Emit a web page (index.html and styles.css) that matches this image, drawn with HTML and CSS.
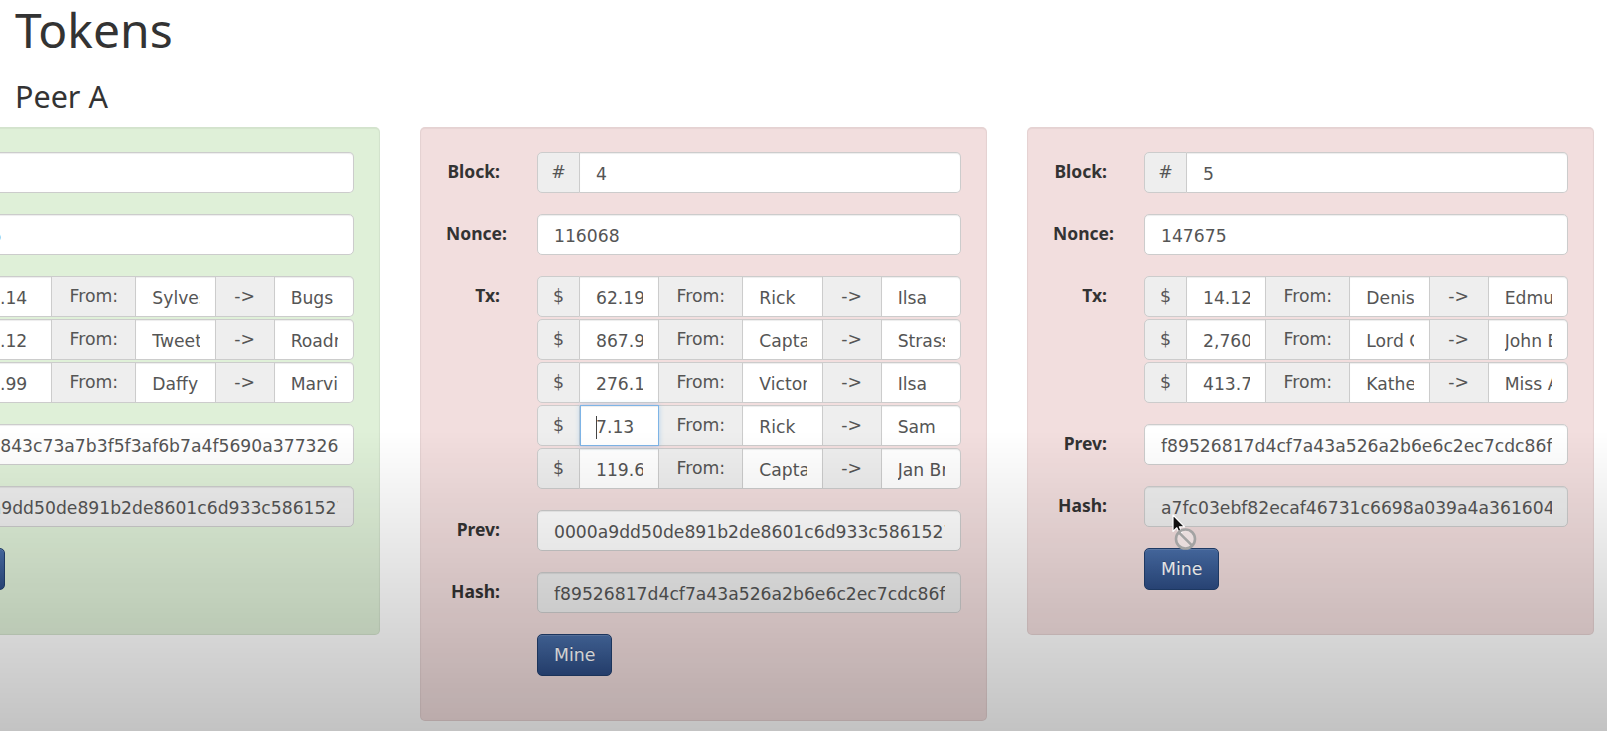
FILE: index.html
```html
<!DOCTYPE html>
<html lang="en">
<head>
<meta charset="utf-8">
<title>Tokens</title>
<link rel="stylesheet" href="styles.css">
</head>
<body>
<div class="page">
  <h1 class="title">Tokens</h1>
  <h3 class="peer">Peer A</h3>

  <div class="chain">
    <!-- Block 3 (valid) -->
    <div class="block block-ok">
      <div class="field">
        <label class="lbl">Block:</label>
        <div class="ctl"><div class="group"><span class="addon a-short">#</span><input class="inp" value="3"></div></div>
      </div>
      <div class="field">
        <label class="lbl">Nonce:</label>
        <div class="ctl"><input class="inp" value="19845"></div>
      </div>
      <div class="field">
        <label class="lbl">Tx:</label>
        <div class="ctl">
          <div class="group txrow"><span class="addon a-short">$</span><input class="inp" value="9.14"><span class="addon a-from">From:</span><input class="inp" value="Sylvester"><span class="addon a-arrow">-&gt;</span><input class="inp" value="Bugs Bunny"></div>
          <div class="group txrow"><span class="addon a-short">$</span><input class="inp" value="7.12"><span class="addon a-from">From:</span><input class="inp" value="Tweety"><span class="addon a-arrow">-&gt;</span><input class="inp" value="Roadrunner"></div>
          <div class="group txrow"><span class="addon a-short">$</span><input class="inp" value="4.99"><span class="addon a-from">From:</span><input class="inp" value="Daffy Duck"><span class="addon a-arrow">-&gt;</span><input class="inp" value="Marvin"></div>
        </div>
      </div>
      <div class="field">
        <label class="lbl">Prev:</label>
        <div class="ctl"><input class="inp" value="000c1843c73a7b3f5f3af6b7a4f5690a377326b1d04e7c9a2f5d8b3e61c7a90"></div>
      </div>
      <div class="field">
        <label class="lbl">Hash:</label>
        <div class="ctl"><input class="inp ro" readonly value="0000a9dd50de891b2de8601c6d933c5861527e0c5f3a9b14d6e2c80f7a1b39d2"></div>
      </div>
      <div class="field">
        <span class="lbl"></span>
        <div class="ctl"><button class="mine">Mine</button></div>
      </div>
    </div>

    <!-- Block 4 (invalid) -->
    <div class="block block-bad">
      <div class="field">
        <label class="lbl">Block:</label>
        <div class="ctl"><div class="group"><span class="addon a-short">#</span><input class="inp" value="4"></div></div>
      </div>
      <div class="field">
        <label class="lbl">Nonce:</label>
        <div class="ctl"><input class="inp" value="116068"></div>
      </div>
      <div class="field">
        <label class="lbl">Tx:</label>
        <div class="ctl">
          <div class="group txrow"><span class="addon a-short">$</span><input class="inp" value="62.19"><span class="addon a-from">From:</span><input class="inp" value="Rick"><span class="addon a-arrow">-&gt;</span><input class="inp" value="Ilsa"></div>
          <div class="group txrow"><span class="addon a-short">$</span><input class="inp" value="867.95"><span class="addon a-from">From:</span><input class="inp" value="Captain Renault"><span class="addon a-arrow">-&gt;</span><input class="inp" value="Strasser"></div>
          <div class="group txrow"><span class="addon a-short">$</span><input class="inp" value="276.11"><span class="addon a-from">From:</span><input class="inp" value="Victor Laszlo"><span class="addon a-arrow">-&gt;</span><input class="inp" value="Ilsa"></div>
          <div class="group txrow"><span class="addon a-short">$</span><input class="inp focus" value="7.13"><span class="addon a-from">From:</span><input class="inp" value="Rick"><span class="addon a-arrow">-&gt;</span><input class="inp" value="Sam"></div>
          <div class="group txrow"><span class="addon a-short">$</span><input class="inp" value="119.68"><span class="addon a-from">From:</span><input class="inp" value="Captain Renault"><span class="addon a-arrow">-&gt;</span><input class="inp" value="Jan Brandel"></div>
        </div>
      </div>
      <div class="field">
        <label class="lbl">Prev:</label>
        <div class="ctl"><input class="inp" value="0000a9dd50de891b2de8601c6d933c5861527e0c5f3a9b14d6e2c80f7a1b39d2"></div>
      </div>
      <div class="field">
        <label class="lbl">Hash:</label>
        <div class="ctl"><input class="inp ro" readonly value="f89526817d4cf7a43a526a2b6e6c2ec7cdc86f3b2e91a0d4c57f8e16b2a3d90c"></div>
      </div>
      <div class="field">
        <span class="lbl"></span>
        <div class="ctl"><button class="mine">Mine</button></div>
      </div>
    </div>

    <!-- Block 5 (invalid) -->
    <div class="block block-bad">
      <div class="field">
        <label class="lbl">Block:</label>
        <div class="ctl"><div class="group"><span class="addon a-short">#</span><input class="inp" value="5"></div></div>
      </div>
      <div class="field">
        <label class="lbl">Nonce:</label>
        <div class="ctl"><input class="inp" value="147675"></div>
      </div>
      <div class="field">
        <label class="lbl">Tx:</label>
        <div class="ctl">
          <div class="group txrow"><span class="addon a-short">$</span><input class="inp" value="14.12"><span class="addon a-from">From:</span><input class="inp" value="Denis"><span class="addon a-arrow">-&gt;</span><input class="inp" value="Edmund"></div>
          <div class="group txrow"><span class="addon a-short">$</span><input class="inp" value="2,760.00"><span class="addon a-from">From:</span><input class="inp" value="Lord Grantham"><span class="addon a-arrow">-&gt;</span><input class="inp" value="John Bates"></div>
          <div class="group txrow"><span class="addon a-short">$</span><input class="inp" value="413.75"><span class="addon a-from">From:</span><input class="inp" value="Katherine"><span class="addon a-arrow">-&gt;</span><input class="inp" value="Miss Austen"></div>
        </div>
      </div>
      <div class="field">
        <label class="lbl">Prev:</label>
        <div class="ctl"><input class="inp" value="f89526817d4cf7a43a526a2b6e6c2ec7cdc86f3b2e91a0d4c57f8e16b2a3d90c"></div>
      </div>
      <div class="field">
        <label class="lbl">Hash:</label>
        <div class="ctl"><input class="inp ro" readonly value="a7fc03ebf82ecaf46731c6698a039a4a3616049e2d7b0c15f8a3e6d29b4c7f01"></div>
      </div>
      <div class="field">
        <span class="lbl"></span>
        <div class="ctl"><button class="mine">Mine</button></div>
      </div>
    </div>
  </div>
</div>

<div class="vignette"></div>

<div class="cursor">
  <svg width="34" height="44" viewBox="0 0 34 44">
    <path d="M7 4 L7 20.5 L10.8 16.8 L13.4 22.6 L15.9 21.5 L13.4 15.8 L18.6 15.8 Z" fill="#111" stroke="#fff" stroke-width="1.2" stroke-linejoin="round"/>
    <circle cx="19.5" cy="28" r="9.5" fill="rgba(255,255,255,0.35)" stroke="#a3a3a3" stroke-width="2.6"/>
    <line x1="12.8" y1="21.3" x2="26.2" y2="34.7" stroke="#a3a3a3" stroke-width="2.6"/>
  </svg>
</div>
</body>
</html>
```

FILE: styles.css
```css
html, body {
  margin: 0;
  padding: 0;
  background: #ffffff;
  overflow: hidden;
}

body {
  font-family: "DejaVu Sans", "Liberation Sans", sans-serif;
  color: #333333;
}

.page {
  padding: 0 15px;
}

.title {
  font-family: "Noto Sans", "DejaVu Sans", sans-serif;
  font-weight: 400;
  font-size: 48px;
  line-height: 1.1;
  margin: 4px 0 0;
  color: #333333;
}

.peer {
  font-family: "Noto Sans", "DejaVu Sans", sans-serif;
  font-weight: 400;
  font-size: 30.5px;
  line-height: 1.1;
  margin: 23px 0 0;
  color: #333333;
}

.chain {
  display: flex;
  align-items: flex-start;
  gap: 40px;
  margin: 14px 0 0 -202px;
}

.block {
  flex: 0 0 567px;
  box-sizing: border-box;
  padding: 24px 25px 44px 25px;
  border-radius: 5px;
  border: 1px solid rgba(0, 0, 0, 0.05);
  box-shadow: inset 0 1px 1px rgba(0, 0, 0, 0.05);
}

.block-ok {
  background: #dff0d8;
}

.block-bad {
  background: #f2dede;
}

.field {
  display: flex;
  gap: 37px;
  margin-bottom: 21px;
}

.field:last-child {
  margin-bottom: 0;
}

.lbl {
  flex: 0 0 54px;
  min-width: 0;
  width: 54px;
  text-align: right;
  white-space: nowrap;
  font-family: "Noto Sans", "DejaVu Sans", sans-serif;
  font-weight: 700;
  font-size: 17.5px;
  line-height: 39px;
  color: #333333;
}

.ctl {
  flex: 1 1 auto;
  min-width: 0;
}

.group {
  display: flex;
  height: 41px;
}

.txrow + .txrow {
  margin-top: 2px;
}

.addon {
  box-sizing: border-box;
  display: flex;
  align-items: center;
  justify-content: center;
  flex: 0 0 auto;
  height: 41px;
  background: #eeeeee;
  border: 1px solid #cccccc;
  border-left: 0;
  color: #555555;
  font-size: 17.3px;
  padding-bottom: 1px;
}

.a-short {
  width: 43px;
}

.a-from {
  width: 84px;
}

.a-arrow {
  width: 59px;
}

.inp {
  display: block;
  box-sizing: border-box;
  width: 100%;
  height: 41px;
  margin: 0;
  padding: 2px 15px 0 16px;
  border: 1px solid #cccccc;
  border-radius: 5px;
  background: #ffffff;
  box-shadow: inset 0 1px 1px rgba(0, 0, 0, 0.075);
  font-family: "DejaVu Sans", "Liberation Sans", sans-serif;
  font-size: 17.2px;
  color: #555555;
  outline: none;
}

.group .inp {
  flex: 1 1 0;
  width: 0;
  min-width: 0;
  border-radius: 0;
  border-left: 0;
  padding-left: 16px;
}

.group > :first-child {
  border-left: 1px solid #cccccc;
  border-radius: 5px 0 0 5px;
}

.group > :last-child {
  border-radius: 0 5px 5px 0;
}

.ro {
  background: #eeeeee;
}

.inp.focus {
  position: relative;
  z-index: 1;
  border: 1px solid #7eb4e6;
  padding-left: 15px;
  background: linear-gradient(#444444, #444444) no-repeat 15px 10px / 1px 23px, #ffffff;
  box-shadow: inset 0 1px 1px rgba(0, 0, 0, 0.075), 0 0 5px rgba(102, 175, 233, 0.45);
}

.mine {
  display: block;
  box-sizing: border-box;
  height: 42px;
  padding: 0 16px;
  border: 1px solid #22406f;
  border-radius: 5px;
  background: linear-gradient(to bottom, #4a70aa, #2d4c84);
  box-shadow: inset 0 1px 0 rgba(255, 255, 255, 0.15);
  color: #ffffff;
  font-family: "DejaVu Sans", "Liberation Sans", sans-serif;
  font-size: 17.3px;
  text-shadow: 0 -1px 0 rgba(0, 0, 0, 0.2);
}

.vignette {
  position: fixed;
  left: 0;
  right: 0;
  top: 430px;
  bottom: 0;
  background: linear-gradient(to bottom, rgba(0, 0, 0, 0), rgba(0, 0, 0, 0.235));
  pointer-events: none;
  z-index: 5;
}

.cursor {
  position: absolute;
  left: 1166px;
  top: 511px;
  z-index: 6;
  line-height: 0;
}
```
